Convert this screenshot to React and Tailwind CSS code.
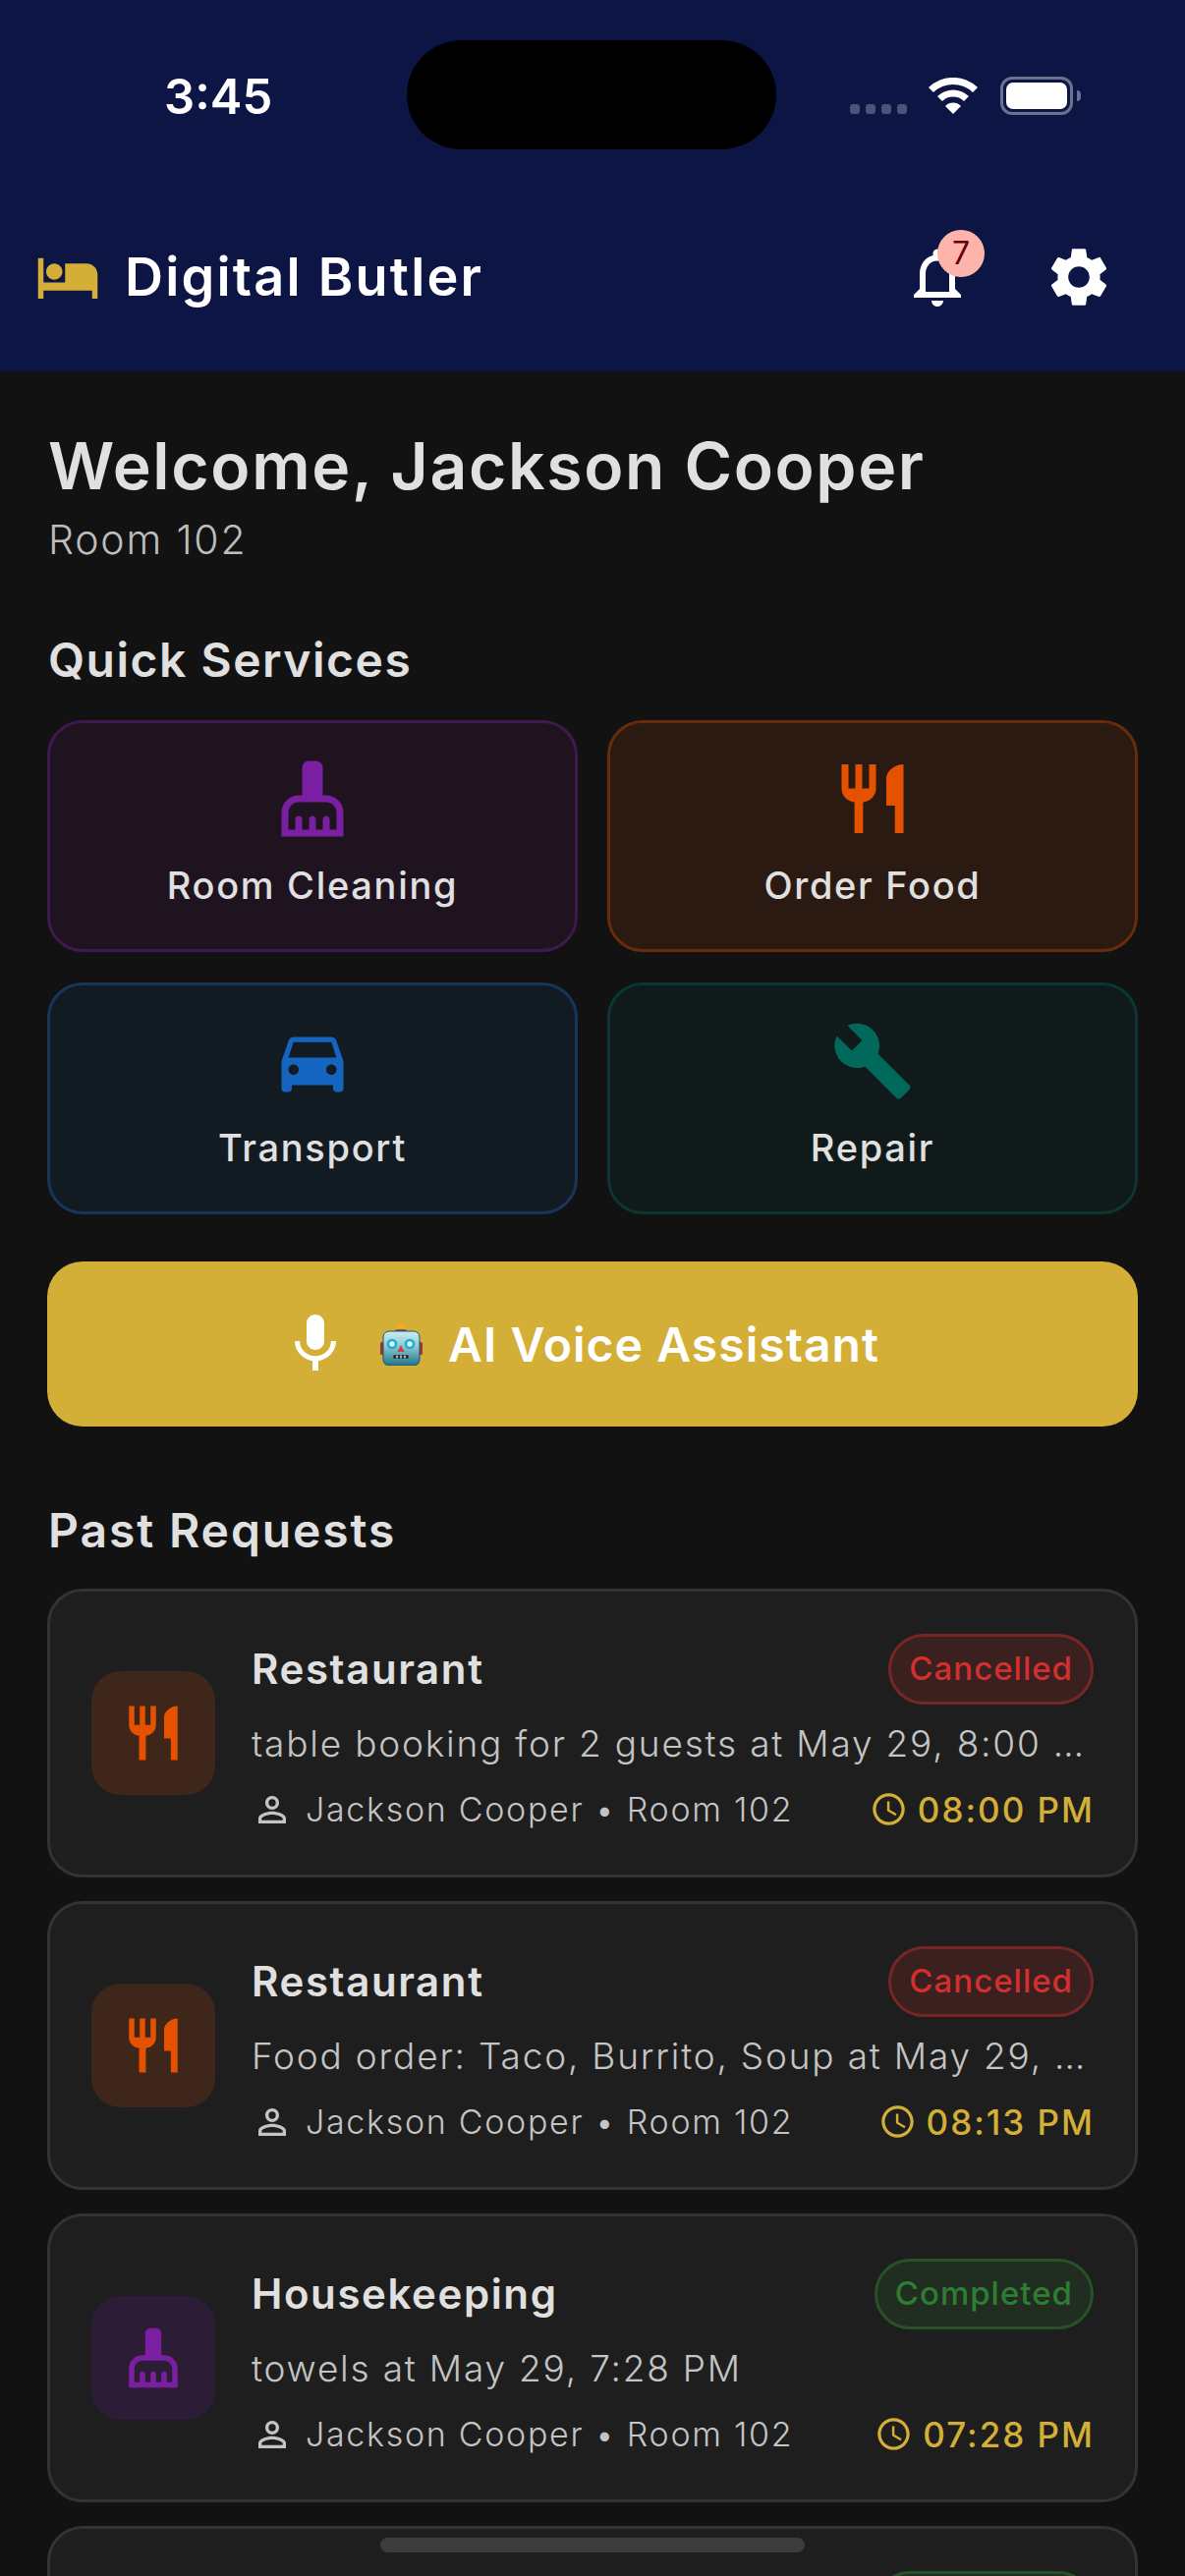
import React from 'react';
import {
    MdHotel,
    MdNotificationsNone,
    MdSettings,
    MdCleaningServices,
    MdRestaurant,
    MdDirectionsCar,
    MdBuild,
    MdMic,
    MdPersonOutline,
    MdAccessTime
} from 'react-icons/md';

const services = [
    { label: 'Room Cleaning', Icon: MdCleaningServices, box: 'bg-[#1f1320] border-[#3e1a50]', color: 'text-[#7b1fa2]' },
    { label: 'Order Food', Icon: MdRestaurant, box: 'bg-[#2a1a11] border-[#662c0e]', color: 'text-[#e65100]' },
    { label: 'Transport', Icon: MdDirectionsCar, box: 'bg-[#121a22] border-[#173659]', color: 'text-[#1565c0]' },
    { label: 'Repair', Icon: MdBuild, box: 'bg-[#111a1a] border-[#0c3630]', color: 'text-[#00695c]' },
];

const requests = [
    { title: 'Restaurant', desc: 'table booking for 2 guests at May 29, 8:00 …', time: '08:00 PM', status: 'Cancelled', kind: 'food' },
    { title: 'Restaurant', desc: 'Food order: Taco, Burrito, Soup at May 29, …', time: '08:13 PM', status: 'Cancelled', kind: 'food' },
    { title: 'Housekeeping', desc: 'towels at May 29, 7:28 PM', time: '07:28 PM', status: 'Completed', kind: 'clean' },
    { title: 'Housekeeping', desc: 'towels at May 29, 7:10 PM', time: '07:10 PM', status: 'Completed', kind: 'clean' },
];

const StatusBar = () => (
    <div className="h-[153px] relative flex items-start">
        <span className="ml-[167px] mt-[70px] text-[49px] leading-[58px] font-semibold text-white">3:45</span>
        <div className="absolute left-[414px] top-[41px] w-[376px] h-[111px] rounded-[56px] bg-black" />
        <div className="absolute left-[865px] top-[106px] flex gap-[6px]">
            {[0, 1, 2, 3].map(i => <div key={i} className="w-[10px] h-[10px] rounded-[3px] bg-[#4a5277]" />)}
        </div>
        <svg className="absolute left-[945px] top-[79px]" width="50" height="37" viewBox="0 0 50 37">
            <path d="M0 10 A36 36 0 0 1 50 10 L45 15 A29 29 0 0 0 5 15 Z M9 19 A23 23 0 0 1 41 19 L36 24 A16 16 0 0 0 14 24 Z M17 29 A11 11 0 0 1 33 29 L25 37 Z" fill="#fff" />
        </svg>
        <div className="absolute left-[1018px] top-[78px] w-[74px] h-[39px] rounded-[12px] border-[3px] border-[#6b7290] p-[3px]">
            <div className="w-full h-full rounded-[7px] bg-white" />
        </div>
        <div className="absolute left-[1096px] top-[92px] w-[4px] h-[11px] rounded-r-[4px] bg-[#6b7290]" />
    </div>
);

const Robot = () => (
    <svg width="43" height="43" viewBox="0 0 43 43" className="block">
        <defs>
            <linearGradient id="robotFace" x1="0" y1="0" x2="0" y2="1">
                <stop offset="0" stopColor="#cdeef0" />
                <stop offset="0.45" stopColor="#8cc7d0" />
                <stop offset="1" stopColor="#1f7488" />
            </linearGradient>
        </defs>
        <circle cx="21" cy="4" r="4" fill="#f7a81e" />
        <rect x="15" y="6" width="12" height="5" rx="2.5" fill="#67597a" />
        <rect x="0" y="19" width="4" height="13" rx="1.5" fill="#a3333a" />
        <rect x="39" y="19" width="4" height="13" rx="1.5" fill="#a3333a" />
        <rect x="3" y="8" width="37" height="35" rx="6" fill="url(#robotFace)" stroke="#15586a" strokeWidth="1" />
        <circle cx="12" cy="21" r="4" fill="#e8fafd" stroke="#18add6" strokeWidth="2.5" />
        <circle cx="30" cy="21" r="4" fill="#e8fafd" stroke="#18add6" strokeWidth="2.5" />
        <path d="M21 22 L24.5 29 L17.5 29 Z" fill="#c9404a" />
        <rect x="13" y="32" width="16" height="4" rx="2" fill="#26323a" />
        <path d="M17 32.5v3M21 32.5v3M25 32.5v3" stroke="#d5dadd" strokeWidth="1.5" />
    </svg>
);

const RequestCard = ({ title, desc, time, status, kind }) => {
    const food = kind === 'food';
    const cancelled = status === 'Cancelled';
    const KindIcon = food ? MdRestaurant : MdCleaningServices;
    return (
        <div className="h-[294px] shrink-0 rounded-[36px] border-[3px] border-[#333333] bg-[#1e1e1e] pl-[42px] pr-[41px] flex items-center gap-[37px]">
            <div className={`w-[126px] h-[126px] shrink-0 rounded-[30px] flex items-center justify-center ${food ? 'bg-[#3e271a]' : 'bg-[#2d1c35]'}`}>
                <KindIcon size={66} className={food ? 'text-[#e65100]' : 'text-[#7b1fa2]'} />
            </div>
            <div className="flex-1 min-w-0 flex flex-col">
                <div className="flex items-center justify-between">
                    <span className="text-[42px] leading-[52px] font-semibold tracking-[1.6px] text-[#e0e0e0]">{title}</span>
                    <span className={`h-[72px] px-[18px] mr-[1px] rounded-full border-[3px] flex items-center text-[33px] font-medium tracking-[1px] ${cancelled ? 'bg-[#3b2020] border-[#772626] text-[#d32f2f]' : 'bg-[#212d21] border-[#275127] text-[#2e7d32]'}`}>{status}</span>
                </div>
                <p className="mt-[16px] text-[37px] leading-[48px] tracking-[1.8px] font-light text-[#c4c4c4] whitespace-nowrap">{desc}</p>
                <div className="mt-[19px] flex items-center justify-between">
                    <div className="flex items-center text-[34px] leading-[48px] tracking-[1.7px] font-light text-[#c4c4c4] whitespace-nowrap">
                        <MdPersonOutline size={42} className="mr-[13px]" />
                        <span>Jackson Cooper • Room 102</span>
                    </div>
                    <div className="flex items-center text-[#d4af37]">
                        <MdAccessTime size={39} className="mr-[10px]" />
                        <span className="text-[35px] leading-[48px] font-medium tracking-[2px] whitespace-nowrap">{time}</span>
                    </div>
                </div>
            </div>
        </div>
    );
};

export default function App() {
    return (
        <div className="relative w-[1206px] h-[2622px] overflow-hidden bg-[#121212] font-['Inter',sans-serif]">
            <header className="h-[378px] bg-[#0c1543]">
                <StatusBar />
                <div className="h-[225px] pl-[36px] pr-[72px] pt-[32px] flex items-center">
                    <MdHotel size={66} className="text-[#d4af37]" />
                    <h1 className="ml-[25px] text-[54px] leading-[66px] font-semibold tracking-[2.2px] text-white">Digital Butler</h1>
                    <div className="ml-auto flex items-center gap-[72px]">
                        <div className="relative">
                            <MdNotificationsNone size={72} className="text-white" />
                            <span className="absolute left-[36px] top-[-12px] w-[48px] h-[48px] rounded-full bg-[#ffb4ab] flex items-center justify-center text-[32px] text-[#690005]">7</span>
                        </div>
                        <MdSettings size={72} className="text-white" />
                    </div>
                </div>
            </header>

            <main className="px-[48px] flex flex-col">
                <h2 className="mt-[56px] ml-[1px] text-[66px] leading-[80px] font-semibold tracking-[1.65px] text-[#e0e0e0]">Welcome, Jackson Cooper</h2>
                <p className="mt-[11px] ml-[1px] text-[41px] leading-[48px] tracking-[1.8px] font-light text-[#bdbdbd]">Room 102</p>

                <h3 className="mt-[69px] ml-[1px] text-[48px] leading-[60px] font-semibold tracking-[1.5px] text-[#e0e0e0]">Quick Services</h3>
                <div className="mt-[31px] grid grid-cols-2 gap-x-[30px] gap-y-[31px]">
                    {services.map(({ label, Icon, box, color }) => (
                        <div key={label} className={`h-[236px] rounded-[36px] border-[3px] pb-[7px] flex flex-col items-center justify-center ${box}`}>
                            <Icon size={84} className={color} />
                            <span className="mt-[22px] text-[38px] leading-[48px] font-medium tracking-[1.7px] text-[#e0e0e0]">{label}</span>
                        </div>
                    ))}
                </div>

                <button className="mt-[48px] h-[168px] rounded-[36px] bg-[#d4af37] pr-[26px] flex items-center justify-center text-white">
                    <MdMic size={72} />
                    <span className="ml-[30px]"><Robot /></span>
                    <span className="ml-[26px] mt-[2px] text-[48px] leading-[60px] font-semibold tracking-[1.05px]">AI Voice Assistant</span>
                </button>

                <h3 className="mt-[76px] ml-[1px] text-[48px] leading-[60px] font-semibold tracking-[1.9px] text-[#e0e0e0]">Past Requests</h3>
                <div className="mt-[29px] flex flex-col gap-[24px]">
                    {requests.map((r, i) => <RequestCard key={i} {...r} />)}
                </div>
            </main>

            <div className="absolute left-[387px] top-[2583px] w-[432px] h-[15px] rounded-full bg-[#3c3c3c]" />
        </div>
    );
}
